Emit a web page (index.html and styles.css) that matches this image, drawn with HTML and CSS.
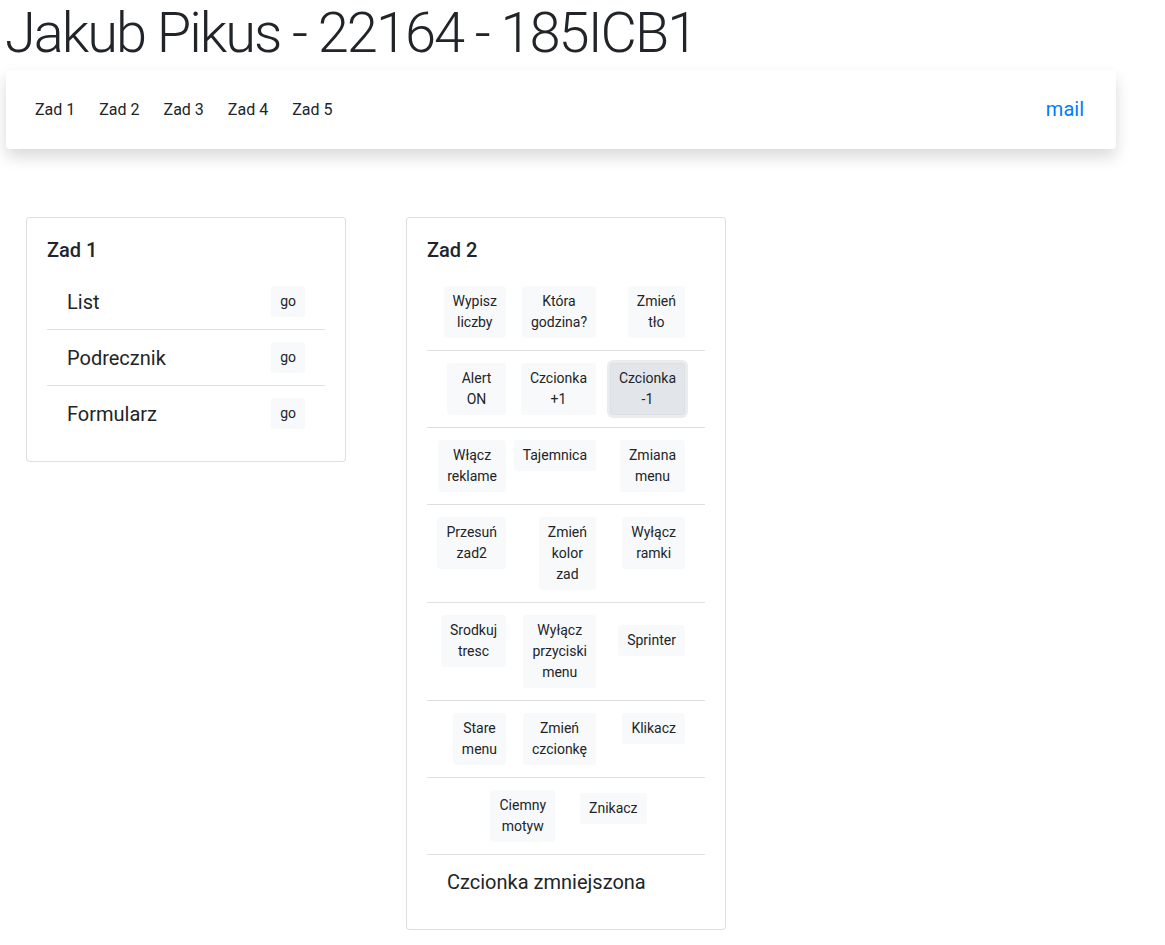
FILE: index.html
```html
<!DOCTYPE html>
<html lang="pl">
<head>
<meta charset="utf-8">
<title>Jakub Pikus - 22164 - 185ICB1</title>
<link rel="stylesheet" href="styles.css">
</head>
<body>
<h1 class="display">Jakub Pikus - 22164 - 185ICB1</h1>
<nav class="navbar">
  <ul class="nav-links">
    <li><a class="nav-link" href="#">Zad 1</a></li>
    <li><a class="nav-link" href="#">Zad 2</a></li>
    <li><a class="nav-link" href="#">Zad 3</a></li>
    <li><a class="nav-link" href="#">Zad 4</a></li>
    <li><a class="nav-link" href="#">Zad 5</a></li>
  </ul>
  <a class="mail" href="#">mail</a>
</nav>
<main class="cards">
  <section class="card">
    <h5 class="card-title">Zad 1</h5>
    <ul class="list">
      <li class="item item-link"><span>List</span><button class="btn">go</button></li>
      <li class="item item-link"><span>Podrecznik</span><button class="btn">go</button></li>
      <li class="item item-link"><span>Formularz</span><button class="btn">go</button></li>
    </ul>
  </section>
  <section class="card">
    <h5 class="card-title">Zad 2</h5>
    <ul class="list">
      <li class="item btn-grid">
        <button class="btn">Wypisz liczby</button>
        <button class="btn">Która godzina?</button>
        <button class="btn">Zmień tło</button>
      </li>
      <li class="item btn-grid">
        <button class="btn btn-wide">Alert ON</button>
        <button class="btn">Czcionka +1</button>
        <button class="btn btn-active">Czcionka -1</button>
      </li>
      <li class="item btn-grid">
        <button class="btn">Włącz reklame</button>
        <button class="btn">Tajemnica</button>
        <button class="btn">Zmiana menu</button>
      </li>
      <li class="item btn-grid">
        <button class="btn">Przesuń zad2</button>
        <button class="btn">Zmień kolor zad</button>
        <button class="btn">Wyłącz ramki</button>
      </li>
      <li class="item btn-grid">
        <button class="btn">Srodkuj tresc</button>
        <button class="btn">Wyłącz przyciski menu</button>
        <button class="btn btn-drop">Sprinter</button>
      </li>
      <li class="item btn-grid">
        <button class="btn">Stare menu</button>
        <button class="btn">Zmień czcionkę</button>
        <button class="btn">Klikacz</button>
      </li>
      <li class="item btn-pair">
        <button class="btn">Ciemny motyw</button>
        <button class="btn btn-nudge">Znikacz</button>
      </li>
      <li class="item status">Czcionka zmniejszona</li>
    </ul>
  </section>
</main>
</body>
</html>
```

FILE: styles.css
```css
* { box-sizing: border-box; }

html, body {
  margin: 0;
  padding: 0;
  background: #fff;
}

body {
  font-family: Roboto, "Noto Sans", "Liberation Sans", sans-serif;
  font-size: 16px;
  line-height: 1.5;
  color: #212529;
}

.display {
  margin: 0 0 3px 5px;
  font-size: 56px;
  font-weight: 300;
  line-height: 1.2;
  letter-spacing: -2px;
}

.navbar {
  width: 1110px;
  margin-left: 6px;
  display: flex;
  align-items: center;
  justify-content: space-between;
  padding: 16px 16px 17px 17px;
  background: #fff;
  border-radius: 4px;
  box-shadow: 0 8px 16px rgba(0, 0, 0, 0.15);
}

.nav-links {
  list-style: none;
  margin: 0;
  padding: 0;
  display: flex;
}

.nav-link {
  display: block;
  padding: 9px 12px 7px;
  font-size: 16px;
  color: #212529;
  text-decoration: none;
}

.mail {
  display: block;
  padding: 8px 16px;
  font-size: 20px;
  color: #007bff;
  text-decoration: none;
}

.cards {
  display: flex;
  align-items: flex-start;
  gap: 60px;
  padding: 68px 0 0 26px;
}

.card {
  width: 320px;
  padding: 20px;
  border: 1px solid rgba(0, 0, 0, 0.125);
  border-radius: 4px;
  background: #fff;
}

.card-title {
  margin: 0 0 12px;
  padding-top: 1px;
  font-size: 20px;
  font-weight: 500;
  line-height: 23px;
}

.list {
  list-style: none;
  margin: 0;
  padding: 0;
}

.item {
  padding: 12px 20px;
  border-bottom: 1px solid rgba(0, 0, 0, 0.125);
}

.item:last-child {
  border-bottom: 0;
}

.item-link {
  display: flex;
  align-items: center;
  justify-content: space-between;
  font-size: 20px;
  line-height: 30px;
}

.btn {
  display: inline-block;
  padding: 4px 8px;
  font-family: inherit;
  font-size: 14px;
  line-height: 1.5;
  font-weight: 400;
  color: #212529;
  text-align: center;
  background: #f8f9fa;
  border: 1px solid #f8f9fa;
  border-radius: 3px;
  cursor: pointer;
}

.btn-grid .btn,
.btn-pair .btn {
  width: min-content;
}

.btn-grid .btn-wide {
  width: 59px;
}

.btn-active {
  background: #e2e6ea;
  border-color: #dae0e5;
  box-shadow: 0 0 0 3px rgba(216, 217, 219, 0.5);
}

.btn-grid {
  display: grid;
  grid-template-columns: 59px 90px 89px;
  justify-items: end;
  align-items: start;
}

.btn-drop {
  margin-top: 10px;
}

.btn-pair {
  display: flex;
  justify-content: center;
  align-items: flex-start;
  gap: 25px;
  padding-left: 25px;
}

.btn-nudge {
  margin-top: 3px;
}

.status {
  font-size: 20px;
  line-height: 30px;
}
```
